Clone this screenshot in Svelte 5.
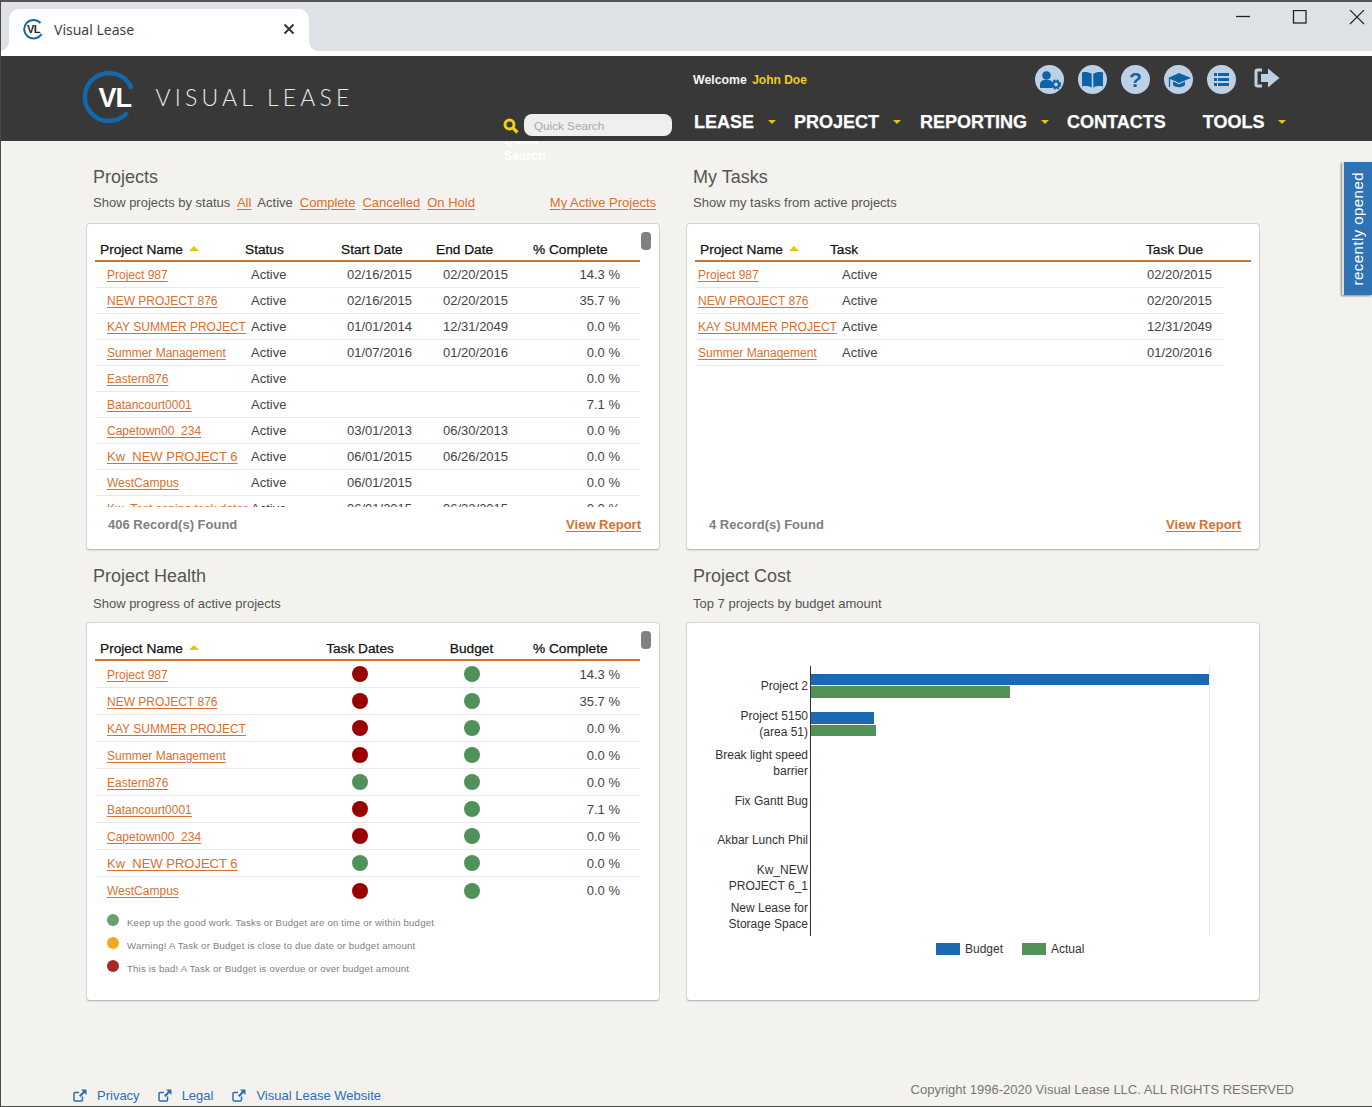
<script>
  const names = ['Project 987','NEW PROJECT 876','KAY SUMMER PROJECT ','Summer Management','Eastern876','Batancourt0001','Capetown00_234','Kw_NEW PROJECT 6','WestCampus'];
  const starts = ['02/16/2015','02/16/2015','01/01/2014','01/07/2016','','','03/01/2013','06/01/2015','06/01/2015','06/01/2015'];
  const ends = ['02/20/2015','02/20/2015','12/31/2049','01/20/2016','','','06/30/2013','06/26/2015','','06/22/2015'];
  const pct = ['14.3','35.7','0.0','0.0','0.0','7.1','0.0','0.0','0.0','0.0'];
  const projects = [...names, 'Kw_Test coping task dates'].map((n, i) => ({ n, s: starts[i], e: ends[i], p: pct[i] }));
  const tasks = projects.slice(0, 4);
  const health = names.map((n, i) => ({ n, p: pct[i], bad: ![4, 7].includes(i) }));
  const legend = [
    ['#6aa070', 'Keep up the good work. Tasks or Budget are on time or within budget'],
    ['#f5a623', 'Warning! A Task or Budget is close to due date or budget amount'],
    ['#a82828', 'This is bad! A Task or Budget is overdue or over budget amount']
  ];
  const nav = [
    { t: 'LEASE', c: true }, { t: 'PROJECT', c: true }, { t: 'REPORTING', c: true },
    { t: 'CONTACTS', c: false }, { t: 'TOOLS', c: true }
  ];
  const labels = [
    ['Project 2', 690], ['Project 5150', 720], ['(area 51)', 736], ['Break light speed', 759], ['barrier', 775],
    ['Fix Gantt Bug', 805], ['Akbar Lunch Phil', 844], ['Kw_NEW', 874], ['PROJECT 6_1', 890],
    ['New Lease for', 912], ['Storage Space', 928]
  ];
  const foot = [['Privacy', 'l1'], ['Legal', 'l2'], ['Visual Lease Website', 'l3']];
  const isBig = (n) => n.startsWith('Kw_NEW');
</script>

{#snippet ext()}
  <svg class="ext" viewBox="0 0 14 13" width="14" height="13"><path d="M9.5 7.5V11a1 1 0 0 1-1 1H2a1 1 0 0 1-1-1V4.500a1 1 0 0 1 1-1h4" fill="none" stroke="#2a6fb5" stroke-width="1.500"/><path d="M8 .5h5.500V6l-2-2-4 4-1.500-1.500 4-4z" fill="#2a6fb5"/></svg>
{/snippet}

<div class="page">
  <div class="chrome">
    <div class="tab">
      <svg width="22" height="22" viewBox="0 0 22 22"><path d="M17.500 5A9.300 9.300 0 1 0 18.500 16" fill="none" stroke="#1468a8" stroke-width="2"/><text x="4" y="15" class="favtxt">VL</text></svg>
      <span class="tabtitle">Visual Lease</span>
      <svg class="tabx" width="12" height="12" viewBox="0 0 12 12"><path d="M1.500 1.500l9 9M10.500 1.500l-9 9" stroke="#333" stroke-width="2"/></svg>
    </div>
    <div class="winctl">
      <svg width="130" height="20" viewBox="0 0 130 20"><path d="M0 6.500h14" stroke="#222" stroke-width="1.300"/><rect x="57.500" y=".5" width="12.500" height="12.500" fill="none" stroke="#222" stroke-width="1.300"/><path d="M114 0l14 14M128 0l-14 14" stroke="#222" stroke-width="1.100"/></svg>
    </div>
  </div>
  <div class="strip"></div>

  <header class="head">
    <svg class="logo" width="280" height="60" viewBox="0 0 280 60">
      <path d="M49.500 18.800A24 24 0 1 0 45.400 42.400" fill="none" stroke="#1468a8" stroke-width="4.500"/>
      <text x="16.500" y="37" class="vl">VL</text>
      <text x="73.500" y="36" class="brand">VISUAL LEASE</text>
    </svg>
    <div class="hright">
      <div class="top">
        <div class="welcome">Welcome <b>John Doe</b></div>
        <div class="icons">
          <svg class="ic" viewBox="0 0 29 29"><circle cx="14.500" cy="14.500" r="14.500" fill="#bdd0e4"/><circle cx="11.500" cy="10.500" r="4.300" fill="#0f62a8"/><path d="M5 23v-3.500c0-3 2.200-4.500 4.500-4.500h4c1.500 0 3 .7 3.800 2v6z" fill="#0f62a8"/><circle cx="21" cy="19.500" r="3" fill="none" stroke="#0f62a8" stroke-width="2.200"/><circle cx="21" cy="19.500" r="4.400" fill="none" stroke="#0f62a8" stroke-width="1.400" stroke-dasharray="2 1.500"/></svg>
          <svg class="ic" viewBox="0 0 29 29"><circle cx="14.500" cy="14.500" r="14.500" fill="#bdd0e4"/><path d="M4 7.500c3-.8 6.500-.6 9.700 1.200v14C10.500 21 7 20.800 4 21.500zM25 7.500c-3-.8-6.500-.6-9.700 1.200v14c3.200-1.700 6.700-1.900 9.700-1.200z" fill="#0f62a8"/></svg>
          <svg class="ic" viewBox="0 0 29 29"><circle cx="14.500" cy="14.500" r="14.500" fill="#bdd0e4"/><text x="14.500" y="21.500" class="q">?</text></svg>
          <svg class="ic" viewBox="0 0 29 29"><circle cx="14.500" cy="14.500" r="14.500" fill="#bdd0e4"/><path d="M15 8L27 13 15 18 4 13z" fill="#0f62a8"/><path d="M9 16.500v3.800c3 2.500 9 2.500 12 0v-3.800L15 19.200z" fill="#0f62a8"/><path d="M5.500 13.500V22" stroke="#0f62a8" stroke-width="1.300"/></svg>
          <svg class="ic" viewBox="0 0 29 29"><circle cx="14.500" cy="14.500" r="14.500" fill="#bdd0e4"/><path d="M7 8h3v3H7zM11 8h11v3H11zM7 13h3v3H7zM11 13h11v3H11zM7 18h3v3H7zM11 18h11v3H11z" fill="#0f62a8"/></svg>
          <svg class="logout" width="26" height="20" viewBox="0 0 26 20"><path d="M8 2H3.500A1.500 1.500 0 0 0 2 3.500v13A1.500 1.500 0 0 0 3.500 18H8" fill="none" stroke="#bdd0e4" stroke-width="3"/><path d="M7 6h7V.5L25.500 10 14 19.500V14H7z" fill="#bdd0e4"/></svg>
        </div>
      </div>
      <div class="bottom">
        <svg class="mag" width="16" height="16" viewBox="0 0 16 16"><circle cx="6.500" cy="6.500" r="4.500" fill="none" stroke="#f0cf10" stroke-width="3"/><path d="M10 10l4.500 4.500" stroke="#f0cf10" stroke-width="3.200"/></svg>
        <div class="search">Quick Search</div>
        <nav class="nav">
          {#each nav as it}
            <span class="navitem" class:nocaret={!it.c}>{it.t}{#if it.c}<i class="caret"></i>{/if}</span>
          {/each}
        </nav>
      </div>
      <div class="qs">Quick<br />Search</div>
    </div>
  </header>

  <main class="grid">
    <section class="panel">
      <h2>Projects</h2>
      <div class="sub subrow">
        <span>Show projects by status <a href="#a" class="lk first">All</a><span class="act">Active</span><a href="#a" class="lk">Complete</a><a href="#a" class="lk">Cancelled</a><a href="#a" class="lk">On Hold</a></span>
        <a href="#a" class="lk mine">My Active Projects</a>
      </div>
      <div class="card c1">
        <div class="thumb"></div>
        <div class="thead tp">
          <span>Project Name <i class="sort"></i></span><span>Status</span><span>Start Date</span><span>End Date</span><span>% Complete</span>
        </div>
        <div class="tbody">
          {#each projects as r}
            <div class="row tp">
              <span class="name"><a href="#a" class="lk" class:big={isBig(r.n)}>{r.n}</a></span><span class="cell">Active</span><span class="cell">{r.s}</span><span class="cell e">{r.e}</span><span class="num">{r.p} %</span>
            </div>
          {/each}
        </div>
        <div class="cfoot"><span class="count">406 Record(s) Found</span><a href="#a" class="lk report">View Report</a></div>
      </div>
    </section>

    <section class="panel">
      <h2>My Tasks</h2>
      <div class="sub">Show my tasks from active projects</div>
      <div class="card c1">
        <div class="thead tt">
          <span>Project Name <i class="sort"></i></span><span>Task</span><span>Task Due</span>
        </div>
        <div class="tbody narrow">
          {#each tasks as r}
            <div class="row tr">
              <span class="nm2"><a href="#a" class="lk">{r.n}</a></span><span>Active</span><span>{r.e}</span>
            </div>
          {/each}
        </div>
        <div class="cfoot"><span class="count c4">4 Record(s) Found</span><a href="#a" class="lk report">View Report</a></div>
      </div>
    </section>

    <section class="panel p2">
      <h2>Project Health</h2>
      <div class="sub">Show progress of active projects</div>
      <div class="card c2">
        <div class="thumb"></div>
        <div class="thead th">
          <span>Project Name <i class="sort"></i></span><span class="ctr">Task Dates</span><span class="ctr">Budget</span><span>% Complete</span>
        </div>
        <div>
          {#each health as r}
            <div class="row th r27">
              <span class="name"><a href="#a" class="lk" class:big={isBig(r.n)}>{r.n}</a></span>
              <span class="ctr"><i class="dot" class:red={r.bad}></i></span>
              <span class="ctr"><i class="dot"></i></span>
              <span class="num">{r.p} %</span>
            </div>
          {/each}
        </div>
        <div class="legend">
          {#each legend as [c, t]}
            <div class="lg"><i style="background:{c}"></i><span>{t}</span></div>
          {/each}
        </div>
      </div>
    </section>

    <section class="panel p2">
      <h2>Project Cost</h2>
      <div class="sub">Top 7 projects by budget amount</div>
      <div class="card c2 chart">
        <svg width="572" height="376" viewBox="687 623 572 376">
          <path d="M1209.500 666v270" stroke="#e8e8e8"/>
          <rect x="811" y="674" width="398" height="11" fill="#1b69b2"/>
          <rect x="811" y="686" width="199" height="12" fill="#529157"/>
          <rect x="811" y="712" width="63" height="12" fill="#1b69b2"/>
          <rect x="811" y="725" width="65" height="11" fill="#529157"/>
          <path d="M810.500 666v270" stroke="#333"/>
          {#each labels as [t, y]}
            <text x="808" y={y} text-anchor="end" class="cl">{t}</text>
          {/each}
          <rect x="936" y="943" width="24" height="12" fill="#1b69b2"/>
          <text x="965" y="953" class="cl">Budget</text>
          <rect x="1022" y="943" width="24" height="12" fill="#529157"/>
          <text x="1051" y="953" class="cl">Actual</text>
        </svg>
      </div>
    </section>
  </main>

  <footer class="foot">
    <div class="links">
      {#each foot as [t, k]}
        <a href="#a" class="flink {k}">{@render ext()}<span>{t}</span></a>
      {/each}
    </div>
    <div class="copy">Copyright 1996-2020 Visual Lease LLC. ALL RIGHTS RESERVED</div>
  </footer>

  <div class="recent"><span>recently opened</span></div>
</div>

<style>
  :global(body) { margin: 0; background: #f3f2ef; }
  .page {
    width: 1372px; height: 1107px; box-sizing: border-box; position: relative; overflow: hidden;
    display: flex; flex-direction: column; background: #f3f2ef;
    border-left: 1px solid #4a4a4a; border-top: 2px solid #555; border-bottom: 1px solid #4a4a4a;
    font-family: "Liberation Sans", Arial, sans-serif; color: #444;
  }
  .chrome { height: 49px; background: #dee1e6; display: flex; justify-content: space-between; flex: none; }
  .tab {
    margin: 7px 0 0 8px; width: 300px; height: 42px; background: #fff; border-radius: 10px 10px 0 0;
    display: flex; align-items: center; box-sizing: border-box; padding: 0 14px 2px 14px; position: relative;
  }
  .tab::before, .tab::after {
    content: ""; position: absolute; bottom: 0; width: 9px; height: 9px;
    background: radial-gradient(circle at var(--c) 0, #dee1e6 8.500px, #fff 9px);
  }
  .tab::before { left: -9px; --c: 0; }
  .tab::after { right: -9px; --c: 100%; }
  .favtxt { font: bold 11px "Liberation Sans", sans-serif; fill: #222; letter-spacing: -.5px; }
  .tabtitle { font: 14px "Noto Sans", sans-serif; color: #444; margin-left: 9px; }
  .tabx { margin-left: auto; margin-right: 0; }
  .winctl { margin: 8px 6px 0 0; }
  .winctl svg { display: block; }
  .strip { height: 5px; background: #fff; flex: none; }
  .head { height: 85px; background: #383838; flex: none; display: flex; position: relative; }
  .logo { margin: 14px 0 0 81px; flex: none; }
  .vl { font: bold 27px "Liberation Sans", sans-serif; fill: #fff; letter-spacing: -1px; }
  .brand { font: 300 23px Lato, sans-serif; fill: #e8e8e8; letter-spacing: 4.200px; }
  .hright { margin-left: 141px; width: 783px; position: relative; }
  .top { height: 58px; display: flex; justify-content: space-between; align-items: center; padding: 0 6px 10px 190px; box-sizing: border-box; }
  .welcome { font-size: 12.300px; font-weight: bold; color: #f4f4f4; margin-top: 0; }
  .welcome b { color: #f0cf10; margin-left: 2px; font-size: 12px; }
  .icons { display: flex; align-items: center; gap: 14px; margin-right: 0; margin-top: -2px; }
  .ic { width: 29px; height: 29px; display: block; }
  .logout { margin: -2px 0 0 4px; display: block; }
  .q { font: bold 21px "Liberation Sans", sans-serif; fill: #0f62a8; text-anchor: middle; }
  .bottom { display: flex; align-items: center; height: 22px; }
  .mag { flex: none; margin-top: 2px; }
  .search {
    margin-left: 5px; width: 148px; height: 22px; background: #efefef; border-radius: 8px; box-sizing: border-box;
    padding-left: 10px; line-height: 24px; font-size: 11.700px; color: #a8a8a8; flex: none;
  }
  .nav { display: flex; margin: -6px 0 0 22px; }
  .navitem { font-size: 18px; font-weight: bold; color: #fff; margin-right: 18px; display: flex; align-items: center; white-space: nowrap; -webkit-text-stroke: .25px #fff; }
  .navitem:nth-child(2) { margin-right: 19px; }
  .navitem.nocaret { margin-right: 37px; }
  .caret { margin-left: 14px; width: 0; height: 0; border: 4px solid transparent; border-top: 4px solid #e8c20c; border-bottom: 0; }
  .qs { position: absolute; left: 1px; top: 76px; font-size: 12.500px; line-height: 16px; font-weight: bold; color: #fff; z-index: 2; clip-path: inset(9px 0 0 0); }

  .grid { display: grid; grid-template-columns: 574px 574px; column-gap: 26px; margin-left: 85px; }
  .panel { height: 409px; padding-top: 24px; box-sizing: border-box; }
  .panel.p2 { height: 451px; padding-top: 14px; }
  h2 { margin: 0 0 0 7px; font-size: 18px; font-weight: 400; color: #555; line-height: 24px; }
  .sub { font-size: 13px; color: #555; margin: 6px 0 0 7px; line-height: 16px; height: 16px; white-space: nowrap; }
  .p2 .sub { margin-top: 8px; }
  .p2 .card { margin-top: 10px; }
  .subrow { display: flex; justify-content: space-between; margin-right: 4px; }
  .act { margin: 0 7px 0 6px; }
  .lk { color: #d9702f; text-decoration: underline; text-underline-offset: 2px; }
  .subrow .lk { margin-right: 7px; }
  .subrow .lk.first { margin-left: 3px; margin-right: 0; }
  .subrow .mine { margin-right: 0; }
  .card {
    margin-top: 12px; box-sizing: border-box; background: #fff; border: 1px solid #d4d4d4; border-bottom-color: #bbb;
    border-radius: 4px; box-shadow: 0 1px 1px rgba(0,0,0,.08); position: relative; padding: 0 0 0 8px;
  }
  .c1 { height: 327px; }
  .c2 { height: 379px; }
  .thumb { position: absolute; left: 554px; top: 8px; width: 10px; height: 18px; border-radius: 4px; background: #808080; }
  .thead {
    display: grid; height: 38px; box-sizing: border-box; padding: 14px 0 0 5px; line-height: 24px; width: 545px;
    font-size: 13.700px; color: #111; border-bottom: 2px solid #d2722f; -webkit-text-stroke: .25px #111; white-space: nowrap;
  }
  .thead.tt { width: 556px; }
  .sort { display: inline-block; width: 0; height: 0; border: 5px solid transparent; border-top: 0; border-bottom: 5px solid #ebc40c; margin: 0 0 3px 2px; }
  .tp { grid-template-columns: 145px 96px 95px 97px 107px; }
  .tt { grid-template-columns: 130px 316px 100px; }
  .th { grid-template-columns: 210px 100px 123px 107px; }
  .tbody { height: 245px; overflow: hidden; width: 545px; }
  .tbody.narrow { width: 529px; }
  .row {
    display: grid; height: 26px; box-sizing: border-box; border-bottom: 1px solid #e8e8e8; align-items: center;
    font-size: 13px; color: #444; white-space: nowrap; padding-left: 5px; width: 545px;
  }
  .row.tr { width: 529px; grid-template-columns: 144px 305px 80px; padding-left: 3px; }
  .row.r27 { height: 27px; }
  .row:last-child.r27 { border-bottom: 0; }
  .row .lk { font-size: 12px; }
  .row .lk.big { font-size: 13px; }
  .name { padding-left: 7px; overflow: hidden; margin-right: -3px; }
  .nm2 { overflow: hidden; margin-right: -3px; }
  .cell { padding-left: 6px; }
  .cell.e { padding-left: 7px; }
  .num { text-align: right; padding-right: 20px; }
  .ctr { text-align: center; display: flex; justify-content: center; }
  .dot { width: 16px; height: 16px; border-radius: 50%; background: #4f9158; display: block; }
  .dot.red { background: #990000; }
  .cfoot { display: flex; justify-content: space-between; align-items: center; height: 34px; margin-right: 18px; padding: 0 0 0 13px; font-size: 13px; font-weight: bold; }
  .count { color: #7f7f7f; }
  .count.c4 { margin-left: 1px; }
  .report { margin-right: 0; }
  .legend { padding: 10px 0 0 12px; }
  .lg { display: flex; align-items: flex-start; height: 23px; font-size: 9.600px; color: #808080; white-space: nowrap; }
  .lg i { width: 12px; height: 12px; border-radius: 50%; margin: 0 8px 0 0; flex: none; }
  .lg span { line-height: 12px; margin-top: 3px; letter-spacing: .2px; }
  .chart { padding: 0; }
  .chart svg { display: block; }
  .cl { font: 12px "Liberation Sans", sans-serif; fill: #333; }

  .foot { flex: 1; display: flex; justify-content: space-between; position: relative; font-size: 13px; }
  .links { display: flex; margin-top: 86px; }
  .flink { display: flex; align-items: center; color: #2a6fb5; text-decoration: none; height: 16px; }
  .flink span { margin-left: 10px; }
  .l1 { margin-left: 72px; }
  .l2 { margin-left: 18px; }
  .l3 { margin-left: 19px; }
  .ext { display: block; flex: none; }
  .copy { color: #777; font-size: 13px; margin: 80px 78px 0 0; line-height: 18px; white-space: nowrap; }

  .recent {
    position: absolute; right: 0; top: 160px; width: 28px; height: 133px; background: #2f73b5; border-left: 2px solid #ddd;
    box-shadow: -1px 1px 2px rgba(0,0,0,.45); display: flex; align-items: center; justify-content: center;
  }
  .recent span { writing-mode: vertical-rl; transform: rotate(180deg); color: #fff; font-size: 15px; letter-spacing: .45px; white-space: nowrap; margin-left: -2px; }
</style>
